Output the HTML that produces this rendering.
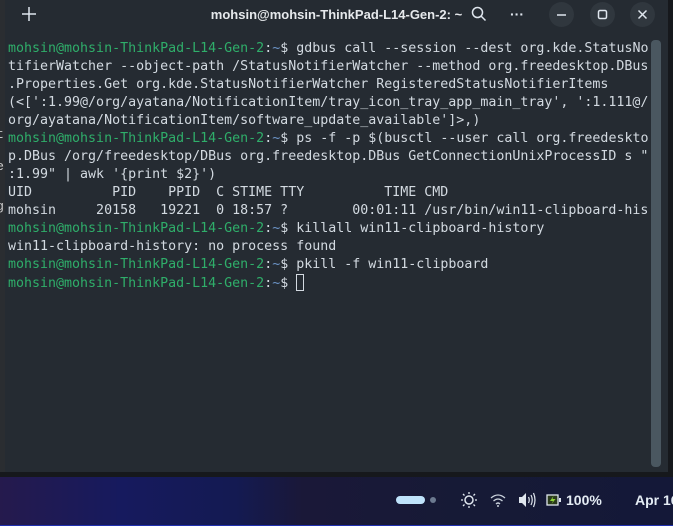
<!DOCTYPE html>
<html><head><style>
html,body{margin:0;padding:0;width:673px;height:526px;overflow:hidden;background:#16181c;font-family:"Liberation Sans",sans-serif}
#bgl{position:absolute;left:0;top:0;width:5px;height:472px;background:#2a2d31;overflow:hidden}
#bgl span{position:absolute;left:-4px;font:13.33px "Liberation Mono",monospace;color:#c8c8c8}
#win{position:absolute;left:5px;top:0;width:663px;height:472px;background:#252b32}
#title{position:absolute;left:0;top:0;width:663px;height:30px;text-align:center;color:#e6e9ec;font-weight:bold;font-size:13px;line-height:29px}
.btn{position:absolute;top:2px;width:25px;height:25px;border-radius:50%;background:#30373e}
#term{position:absolute;left:3px;top:40px;font:13.3px/18px "DejaVu Sans Mono","Liberation Mono",monospace;color:#d3dae1;white-space:pre}
.g{color:#2fae6a}.b{color:#6c95c8}
#sb{position:absolute;left:646px;top:40px;width:10px;height:427px;background:#4a5760;border-radius:4px}
#tb{position:absolute;left:0;top:477px;width:673px;height:49px;background:linear-gradient(90deg,#251a4d 0%,#161a5e 18%,#141a52 35%,#1a1838 45%,#161a36 70%,#141838 100%)}
#tb .t{position:absolute;top:15px;color:#e4ecf4;font-weight:bold;font-size:14px;white-space:nowrap}
</style></head><body>
<div id="bgl"><span style="top:128px">t</span><span style="top:160px">e</span><span style="top:200px">g</span></div>
<div id="win">
<div id="title">mohsin@mohsin-ThinkPad-L14-Gen-2: ~</div>
<svg style="position:absolute;left:17px;top:7px" width="14" height="14"><path d="M7 0V14M0 7H14" stroke="#dfe6ee" stroke-width="1.5"/></svg>
<svg style="position:absolute;left:466px;top:6px" width="16" height="16"><circle cx="6.5" cy="6.5" r="5" fill="none" stroke="#dfe6ee" stroke-width="1.5"/><path d="M10 10L14.5 14.5" stroke="#dfe6ee" stroke-width="1.5"/></svg>
<div style="position:absolute;left:505px;top:6px;color:#dfe6ee;font-size:14px;font-weight:bold">···</div>
<div class="btn" style="left:544px"><svg width="25" height="25"><path d="M8 13H17" stroke="#dfe6ee" stroke-width="1.5"/></svg></div>
<div class="btn" style="left:585px"><svg width="25" height="25"><rect x="8.5" y="8.5" width="8" height="8" rx="1.5" fill="none" stroke="#dfe6ee" stroke-width="1.5"/></svg></div>
<div class="btn" style="left:625px"><svg width="25" height="25"><path d="M8.5 8.5L16.5 16.5M16.5 8.5L8.5 16.5" stroke="#dfe6ee" stroke-width="1.5"/></svg></div>
<div id="term"><span class="g">mohsin@mohsin-ThinkPad-L14-Gen-2</span>:<span class="b">~</span>$ gdbus call --session --dest org.kde.StatusNo
tifierWatcher --object-path /StatusNotifierWatcher --method org.freedesktop.DBus
.Properties.Get org.kde.StatusNotifierWatcher RegisteredStatusNotifierItems
(&lt;[':1.99@/org/ayatana/NotificationItem/tray_icon_tray_app_main_tray', ':1.111@/
org/ayatana/NotificationItem/software_update_available']&gt;,)
<span class="g">mohsin@mohsin-ThinkPad-L14-Gen-2</span>:<span class="b">~</span>$ ps -f -p $(busctl --user call org.freedeskto
p.DBus /org/freedesktop/DBus org.freedesktop.DBus GetConnectionUnixProcessID s "
:1.99" | awk '{print $2}')
UID          PID    PPID  C STIME TTY          TIME CMD
mohsin     20158   19221  0 18:57 ?        00:01:11 /usr/bin/win11-clipboard-his
<span class="g">mohsin@mohsin-ThinkPad-L14-Gen-2</span>:<span class="b">~</span>$ killall win11-clipboard-history
win11-clipboard-history: no process found
<span class="g">mohsin@mohsin-ThinkPad-L14-Gen-2</span>:<span class="b">~</span>$ pkill -f win11-clipboard
<span class="g">mohsin@mohsin-ThinkPad-L14-Gen-2</span>:<span class="b">~</span>$ <span style="display:inline-block;width:8px;height:17px;border:1px solid #d3dae1;box-sizing:border-box;vertical-align:-4px"></span></div>
<div id="sb"></div>
</div>
<div id="tb">
<div style="position:absolute;left:396px;top:19px;width:29px;height:8px;border-radius:4px;background:#bfe3fb"></div>
<div style="position:absolute;left:430px;top:20px;width:6px;height:6px;border-radius:50%;background:#6c7a90"></div>
<svg style="position:absolute;left:461px;top:15px" width="16" height="16"><circle cx="8" cy="8" r="4" fill="none" stroke="#dfe6ee" stroke-width="1.5"/><path d="M8 0V2M8 14V16M0 8H2M14 8H16M2 2L3.5 3.5M12.5 12.5L14 14M2 14L3.5 12.5M12.5 3.5L14 2" stroke="#dfe6ee" stroke-width="1.3"/></svg>
<svg style="position:absolute;left:490px;top:16px" width="16" height="14"><path d="M1 5Q8 -1 15 5M3.5 8Q8 4 12.5 8M6 11Q8 9 10 11" fill="none" stroke="#c8d0da" stroke-width="1.3"/><circle cx="8" cy="13" r="1" fill="#c8d0da"/></svg>
<svg style="position:absolute;left:518px;top:15px" width="18" height="16"><path d="M1 5H4L8 1V15L4 11H1Z" fill="#dfe6ee"/><path d="M10.5 5Q12 8 10.5 11M13 3Q15.5 8 13 13M15.5 1Q18.5 8 15.5 15" fill="none" stroke="#dfe6ee" stroke-width="1.2"/></svg>
<svg style="position:absolute;left:546px;top:16px" width="16" height="14"><rect x="1" y="2" width="11" height="10" fill="#2a3a1c" stroke="#dfe6ee" stroke-width="1.3"/><path d="M7.5 3L4 8H7L5.5 11L9.5 6H6.5Z" fill="#8fd63a"/><rect x="13" y="5" width="2" height="4" fill="#dfe6ee"/></svg>
<div class="t" style="left:566px">100%</div>
<div class="t" style="left:635px">Apr 16</div>
<div style="position:absolute;left:0;top:48px;width:673px;height:1px;background:#2030b0"></div>
</div>
</body></html>
